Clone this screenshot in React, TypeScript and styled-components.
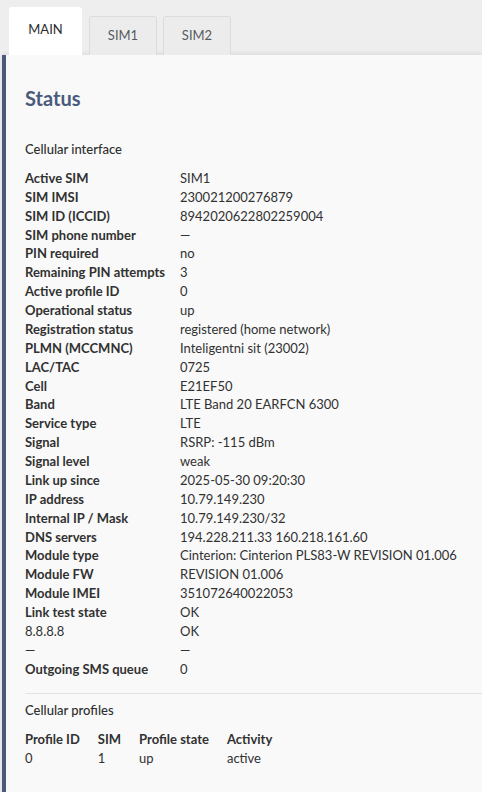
import React from "react";
import styled, { createGlobalStyle } from "styled-components";

const GlobalStyle = createGlobalStyle`
  html, body {
    margin: 0;
    padding: 0;
    background: #eeeeee;
    font-family: Lato, "Open Sans", "Liberation Sans", sans-serif;
    color: #313131;
  }
  * { box-sizing: border-box; }
`;

type Row = { label: string; value: string; plain?: boolean };

const rows: Row[] = [
  { label: "Active SIM", value: "SIM1" },
  { label: "SIM IMSI", value: "230021200276879" },
  { label: "SIM ID (ICCID)", value: "8942020622802259004" },
  { label: "SIM phone number", value: "—" },
  { label: "PIN required", value: "no" },
  { label: "Remaining PIN attempts", value: "3" },
  { label: "Active profile ID", value: "0" },
  { label: "Operational status", value: "up" },
  { label: "Registration status", value: "registered (home network)" },
  { label: "PLMN (MCCMNC)", value: "Inteligentni sit (23002)" },
  { label: "LAC/TAC", value: "0725" },
  { label: "Cell", value: "E21EF50" },
  { label: "Band", value: "LTE Band 20 EARFCN 6300" },
  { label: "Service type", value: "LTE" },
  { label: "Signal", value: "RSRP: -115 dBm" },
  { label: "Signal level", value: "weak" },
  { label: "Link up since", value: "2025-05-30 09:20:30" },
  { label: "IP address", value: "10.79.149.230" },
  { label: "Internal IP / Mask", value: "10.79.149.230/32" },
  { label: "DNS servers", value: "194.228.211.33 160.218.161.60" },
  { label: "Module type", value: "Cinterion: Cinterion PLS83-W REVISION 01.006" },
  { label: "Module FW", value: "REVISION 01.006" },
  { label: "Module IMEI", value: "351072640022053" },
  { label: "Link test state", value: "OK" },
  { label: "8.8.8.8", value: "OK", plain: true },
  { label: "—", value: "—", plain: true },
  { label: "Outgoing SMS queue", value: "0" },
];

const profileHead = ["Profile ID", "SIM", "Profile state", "Activity"];
const profileRows = [["0", "1", "up", "active"]];

export default function App() {
  return (
    <Page>
      <GlobalStyle />
      <TabBar>
        <Tab $active>MAIN</Tab>
        <Tab>SIM1</Tab>
        <Tab>SIM2</Tab>
      </TabBar>
      <Panel>
        <Heading>Status</Heading>
        <SubHeading>Cellular interface</SubHeading>
        <InfoGrid>
          {rows.map((r, i) => (
            <React.Fragment key={i}>
              <Label $plain={r.plain}>{r.label}</Label>
              <Value>{r.value}</Value>
            </React.Fragment>
          ))}
        </InfoGrid>
        <Divider />
        <SectionTitle>Cellular profiles</SectionTitle>
        <ProfileGrid>
          {profileHead.map((h) => (
            <HeadCell key={h}>{h}</HeadCell>
          ))}
          {profileRows.map((row, i) =>
            row.map((c, j) => <Value key={`${i}-${j}`}>{c}</Value>)
          )}
        </ProfileGrid>
      </Panel>
    </Page>
  );
}

const Page = styled.div`
  min-height: 792px;
  padding-left: 2px;
  font-size: 13px;
  line-height: 18.88px;
`;

const TabBar = styled.div`
  display: flex;
  align-items: flex-end;
  gap: 6px;
  padding: 7px 0 0 7px;
  height: 55px;
`;

const Tab = styled.div<{ $active?: boolean }>`
  width: ${(p) => (p.$active ? "73px" : "68px")};
  height: ${(p) => (p.$active ? "48px" : "39px")};
  padding-top: ${(p) => (p.$active ? "12.5px" : "8.5px")};
  text-align: center;
  border-radius: 3px 3px 0 0;
  background: ${(p) => (p.$active ? "#ffffff" : "#ececec")};
  border: ${(p) => (p.$active ? "none" : "1px solid #dcdcdc")};
  border-bottom: none;
  color: ${(p) => (p.$active ? "#2b2b2b" : "#555a60")};
  margin-right: ${(p) => (p.$active ? "1px" : "0")};
`;

const Panel = styled.div`
  background: #f9f9f9;
  border-left: 4px solid #4b5a7b;
  box-shadow: 0 -2px 4px rgba(0, 0, 0, 0.07);
  padding: 31px 0 30px 19px;
  min-height: 737px;
`;

const Heading = styled.h2`
  margin: 0;
  font-size: 20px;
  line-height: 24px;
  font-weight: 700;
  color: #4a5a7c;
`;

const SubHeading = styled.div`
  margin-top: 30px;
  font-weight: 500;
  color: #2e2e2e;
`;

const SectionTitle = styled(SubHeading)`
  margin-top: 0;
`;

const InfoGrid = styled.div`
  display: grid;
  grid-template-columns: 155px 1fr;
  margin-top: 10px;
`;

const Label = styled.div<{ $plain?: boolean }>`
  font-weight: ${(p) => (p.$plain ? 400 : 700)};
  white-space: nowrap;
`;

const Value = styled.div`
  white-space: nowrap;
`;

const Divider = styled.hr`
  border: none;
  border-top: 1px solid #e3e3e3;
  margin: 14px 0 7px 0;
`;

const ProfileGrid = styled.div`
  display: grid;
  grid-template-columns: repeat(4, max-content);
  column-gap: 18px;
  margin-top: 10.5px;
`;

const HeadCell = styled.div`
  font-weight: 700;
`;
